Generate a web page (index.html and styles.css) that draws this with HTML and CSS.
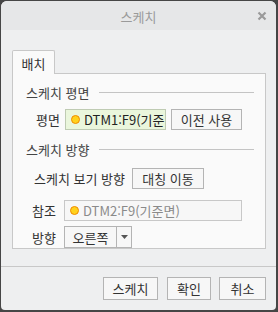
FILE: index.html
```html
<!DOCTYPE html>
<html lang="ko">
<head>
<meta charset="utf-8">
<link rel="stylesheet" href="styles.css">
</head>
<body>
<div class="window">
  <div class="titlebar">
    <span class="title">스케치</span>
    <svg class="close" width="10" height="10" viewBox="0 0 10 10"><path d="M1.5 1.5 L8.5 8.5 M8.5 1.5 L1.5 8.5" stroke="#9a9a9a" stroke-width="2.2" fill="none"/></svg>
  </div>
  <div class="content">
    <div class="tabs"><div class="tab">배치</div></div>
    <div class="panel">
      <div class="section s1"><span>스케치 평면</span><span class="rule"></span></div>
      <div class="row r1">
        <span class="label l1">평면</span>
        <div class="field green"><span class="dot"></span><span class="ftext">DTM1:F9(기준면)</span></div>
        <button class="btn b1">이전 사용</button>
      </div>
      <div class="section s2"><span>스케치 방향</span><span class="rule"></span></div>
      <div class="row r2">
        <span class="label l2">스케치 보기 방향</span>
        <button class="btn b2">대칭 이동</button>
      </div>
      <div class="row r3">
        <span class="label l3">참조</span>
        <div class="field plain"><span class="dot"></span><span class="ftext grey">DTM2:F9(기준면)</span></div>
      </div>
      <div class="row r4">
        <span class="label l3">방향</span>
        <div class="combo"><span class="cval">오른쪽</span><span class="carrow"><svg width="7" height="4" viewBox="0 0 7 4"><path d="M0 0 H7 L3.5 4 Z" fill="#555"/></svg></span></div>
      </div>
    </div>
  </div>
  <div class="footer">
    <button class="btn f1">스케치</button>
    <button class="btn f2">확인</button>
    <button class="btn f3">취소</button>
  </div>
</div>
</body>
</html>
```
FILE: styles.css
```css
* { box-sizing: border-box; }
html, body { margin: 0; padding: 0; }
body {
  width: 278px; height: 312px;
  background: #464646;
  font-family: "Noto Sans CJK KR", "Noto Sans", sans-serif;
  font-size: 13px;
  color: #333;
  padding: 1px 2px 2px 1px;
}
.window {
  width: 275px; height: 309px;
  background: #eeeff0;
  border-radius: 6px 6px 4px 4px;
  overflow: hidden;
  display: flex; flex-direction: column;
}
.titlebar {
  height: 29px; background: #e6e7e8;
  position: relative;
  display: flex; align-items: center; justify-content: center;
}
.title { color: #9a9a9a; font-size: 13px; line-height: 1; margin-top: 1px; }
.close { position: absolute; right: 9px; top: 10px; }
.content { padding: 20px 10px 0 11px; }
.tabs { display: flex; height: 23px; }
.tab {
  width: 43px; height: 24px;
  background: #fafafa;
  border: 1px solid #c8c8c8; border-bottom: none;
  border-radius: 2px 2px 0 0;
  display: flex; align-items: center; justify-content: center;
  position: relative; z-index: 1;
  color: #333; line-height: 1; padding-top: 2px;
}
.panel {
  width: 254px; height: 176px;
  background: #fafafa;
  border: 1px solid #c8c8c8;
  padding: 10px 11px 0 13px;
}
.section {
  display: flex; align-items: center; height: 16px;
  color: #444; line-height: 1;
}
.section .rule { flex: 1; height: 1px; background: #c4c4c4; margin-left: 10px; }
.s2 { margin-top: 11px; }
.row { display: flex; align-items: center; }
.r1 { margin-top: 9px; height: 21px; }
.r2 { margin-top: 11px; height: 21px; }
.r3 { margin-top: 11px; height: 21px; }
.r4 { margin-top: 5px; height: 22px; }
.label { line-height: 1; color: #333; }
.l1 { margin-left: 10px; width: 29px; }
.l2 { margin-left: 8px; width: 98px; }
.l3 { margin-left: 6px; width: 32px; }
.field {
  height: 21px; display: flex; align-items: center;
  border: 1px solid #c8c8c8; overflow: hidden; white-space: nowrap;
  padding-left: 5px;
}
.green { width: 101px; background: #eaf6dc; border-color: #bfcbb3; }
.plain { width: 178px; background: #f7f7f7; }
.dot {
  width: 9px; height: 9px; border-radius: 50%;
  background: #ffd21c; border: 1px solid #f08a00;
  flex: none; margin-right: 4px;
}
.ftext { line-height: 1; color: #222; }
.ftext.grey { color: #8a8a8a; }
.btn {
  font: inherit; color: #333; line-height: 1;
  background: #f7f7f7; border: 1px solid #b4b4b4;
  border-radius: 0; padding: 0;
  display: flex; align-items: center; justify-content: center;
}
.b1 { width: 71px; height: 21px; margin-left: 5px; }
.b2 { width: 72px; height: 21px; }
.combo {
  display: flex; height: 22px; width: 68px;
  border: 1px solid #b4b4b4; background: #f7f7f7;
}
.cval { width: 52px; display: flex; align-items: center; justify-content: center; line-height: 1; border-right: 1px solid #b4b4b4; }
.carrow { flex: 1; display: flex; align-items: center; justify-content: center; }
.footer {
  margin-top: 17px; border-top: 1px solid #c8c8c8;
  padding: 10px 10px 0 0;
  display: flex; justify-content: flex-end;
}
.f1 { width: 55px; height: 23px; margin-right: 9px; }
.f2 { width: 44px; height: 23px; margin-right: 8px; }
.f3 { width: 47px; height: 23px; }
```
